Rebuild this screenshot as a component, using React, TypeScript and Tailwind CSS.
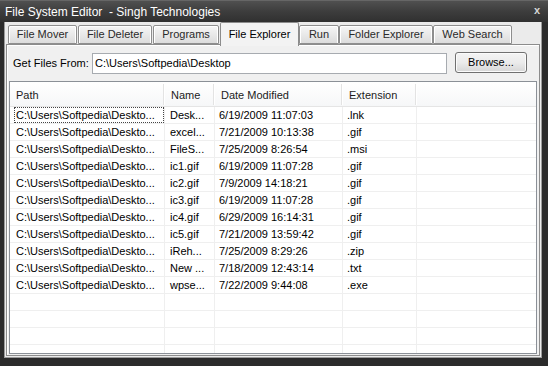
import React from "react"

const rows = [
  ["Desk...", "6/19/2009 11:07:03", ".lnk"],
  ["excel...", "7/21/2009 10:13:38", ".gif"],
  ["FileS...", "7/25/2009 8:26:54", ".msi"],
  ["ic1.gif", "6/19/2009 11:07:28", ".gif"],
  ["ic2.gif", "7/9/2009 14:18:21", ".gif"],
  ["ic3.gif", "6/19/2009 11:07:28", ".gif"],
  ["ic4.gif", "6/29/2009 16:14:31", ".gif"],
  ["ic5.gif", "7/21/2009 13:59:42", ".gif"],
  ["iReh...", "7/25/2009 8:29:26", ".zip"],
  ["New ...", "7/18/2009 12:43:14", ".txt"],
  ["wpse...", "7/22/2009 9:44:08", ".exe"],
]

const tabs = [
  { label: "File Mover", cls: "ml-[2px] w-[69px]" },
  { label: "File Deleter", cls: "ml-[1px] w-[74px]" },
  { label: "Programs", cls: "ml-[1px] w-[66px]" },
  { label: "File Explorer", cls: "ml-[1px] w-[79px]", active: true },
  { label: "Run", cls: "w-[40px]" },
  { label: "Folder Explorer", cls: "w-[94px]" },
  { label: "Web Search", cls: "w-[79px]" },
]

function Tab({ label, cls, active }: { label: string; cls: string; active?: boolean }) {
  if (active) {
    return (
      <div
        className={`${cls} relative z-10 h-[24px] -mb-[1px] flex items-center justify-center rounded-t-[2px] border border-b-0 border-[#8c8c8c] bg-[#f3f3f3] text-black`}
      >
        {label}
      </div>
    )
  }
  return (
    <div
      className={`${cls} mt-[3px] h-[19px] flex items-center justify-center rounded-t-[2px] border border-[#8e8e8e] bg-gradient-to-b from-[#f6f6f6] via-[#e9e9e9] to-[#dcdcdc] text-[#2a2a2a] shadow-[inset_1px_1px_0_#ffffff,inset_-1px_0_0_#ffffff]`}
    >
      {label}
    </div>
  )
}

function HeaderCell({ label, w }: { label: string; w: string }) {
  return (
    <div className={`${w} h-full flex items-center justify-between pl-[6px]`}>
      <span className="pt-[3px] text-[#1c1c1c]">{label}</span>
      <div className="h-[21px] w-[2px] border-l border-[#e3e3e3] border-r border-r-white" />
    </div>
  )
}

function Row({ data, focused }: { data?: string[]; focused?: boolean }) {
  return (
    <div className="flex h-[17px] shrink-0 border-b border-[#efefef] text-black">
      {focused ? (
        <div className="w-[155px] h-full border-r border-[#efefef] pl-[4px] flex">
          <div className="flex-1 h-full border border-dotted border-[#444] pl-[1px] flex items-center">
            C:\Users\Softpedia\Deskto...
          </div>
        </div>
      ) : (
        <div className="w-[155px] h-full border-r border-[#efefef] pl-[6px] flex items-center">
          {data ? "C:\\Users\\Softpedia\\Deskto..." : ""}
        </div>
      )}
      <div className="w-[50px] h-full border-r border-[#efefef] pl-[5px] flex items-center">{data?.[0]}</div>
      <div className="w-[128px] h-full border-r border-[#efefef] pl-[4px] flex items-center">{data?.[1]}</div>
      <div className="w-[74px] h-full border-r border-[#efefef] pl-[4px] flex items-center">{data?.[2]}</div>
      <div className="flex-1 h-full" />
    </div>
  )
}

export default function App() {
  return (
    <div className="w-[548px] h-[366px] bg-[#2b2b2b] flex flex-col overflow-hidden font-['Liberation_Sans',Arial,sans-serif] text-[11px]">
      {/* title bar */}
      <div className="h-[22px] shrink-0 flex items-center justify-between pl-[5px] pr-[8px] bg-gradient-to-b from-[#505050] via-[#3d3d3d] to-[#303030] border-t border-[#666666]">
        <span className="text-[12px] text-white whitespace-pre">File System Editor  - Singh Technologies</span>
        <span className="text-[11px] font-bold text-[#d6d6d6] -mt-[2px]">x</span>
      </div>

      <div className="flex-1 min-h-0 flex pl-[4px] pr-[6px] pb-[8px]">
        {/* client area */}
        <div className="flex-1 min-h-0 flex flex-col bg-[#ebebeb] border-l border-r border-b border-[#9b9b9b] pl-[1px] pr-[1px] pb-[1px]">
          {/* tabs */}
          <div className="h-[22px] shrink-0 flex items-start">
            {tabs.map((t) => (
              <Tab key={t.label} {...t} />
            ))}
          </div>

          {/* tab page */}
          <div className="flex-1 min-h-0 flex flex-col border border-[#8c8c8c] bg-[#f0f0f0] shadow-[inset_1px_1px_0_#ffffff]">
            <div className="flex items-center pt-[7px] pl-[6px] h-[29px] shrink-0">
              <span className="w-[79px] text-black">Get Files From:</span>
              <div className="w-[355px] h-[21px] bg-white border border-[#a7abb0] flex items-center pl-[2px] text-black">
                C:\Users\Softpedia\Desktop
              </div>
              <button className="ml-[8px] -mt-[2px] w-[72px] h-[21px] rounded-[3px] border border-[#707070] bg-gradient-to-b from-[#f4f4f4] via-[#ebebeb] to-[#d6d6d6] text-black shadow-[inset_0_0_0_1px_#fbfbfb]">
                Browse...
              </button>
            </div>

            {/* list view */}
            <div className="mt-[7px] ml-[2px] mb-[1px] w-[528px] flex-1 min-h-0 flex flex-col border border-[#8b9097] bg-white overflow-hidden">
              <div className="h-[25px] shrink-0 flex items-center bg-gradient-to-b from-white to-[#f6f7f8] border-b border-[#e5e5e5]">
                <HeaderCell label="Path" w="w-[155px]" />
                <HeaderCell label="Name" w="w-[50px]" />
                <HeaderCell label="Date Modified" w="w-[128px]" />
                <HeaderCell label="Extension" w="w-[74px]" />
                <div className="flex-1" />
              </div>
              {rows.map((r, i) => (
                <Row key={i} data={r} focused={i === 0} />
              ))}
              {[0, 1, 2, 3, 4].map((i) => (
                <Row key={"e" + i} />
              ))}
            </div>
          </div>
        </div>
      </div>
    </div>
  )
}
